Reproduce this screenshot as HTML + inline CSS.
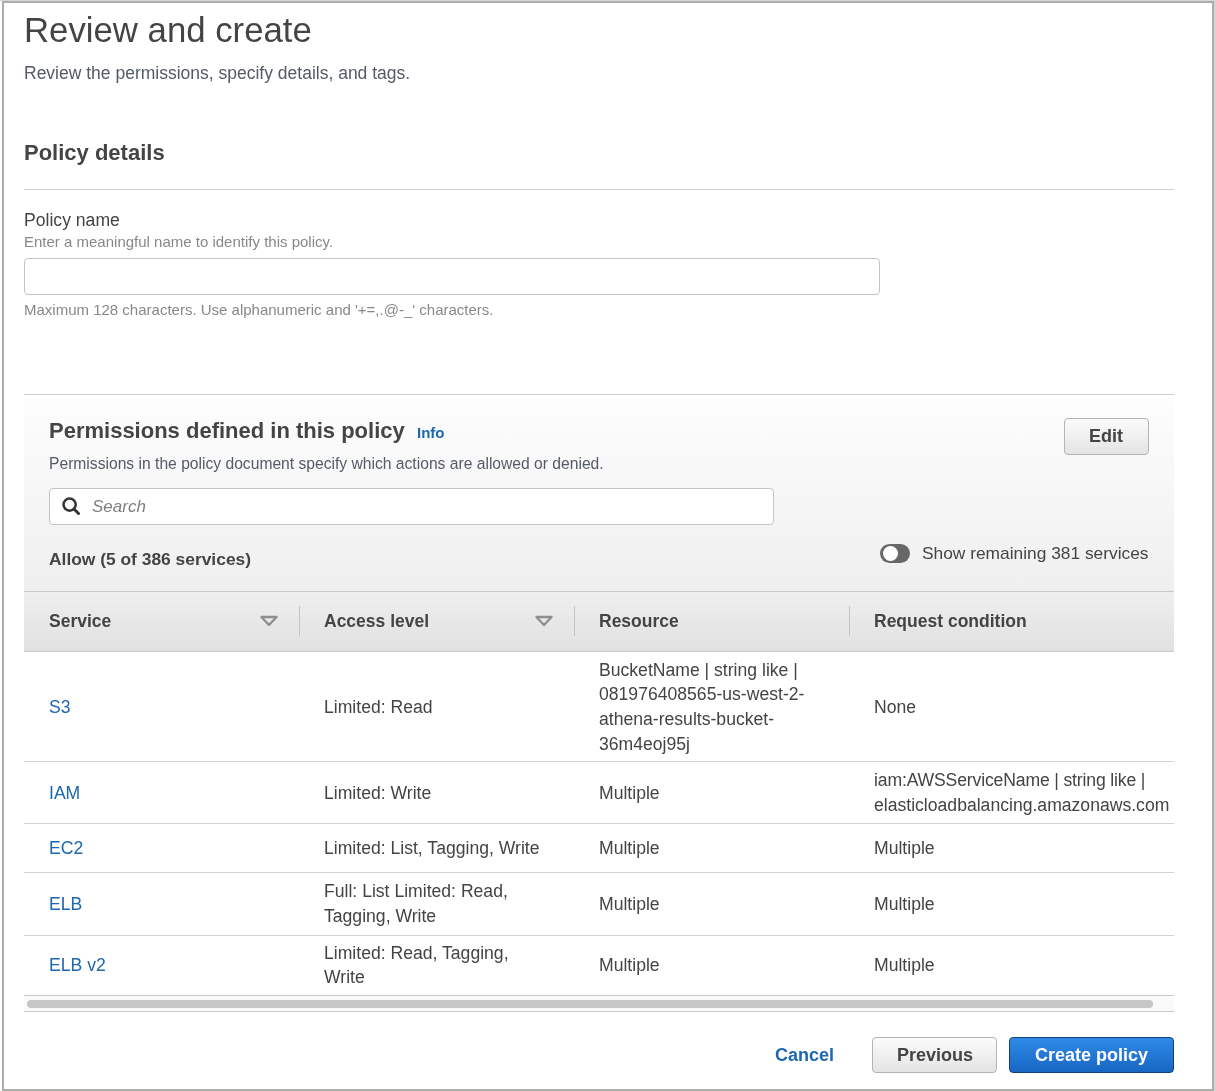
<!DOCTYPE html>
<html><head><meta charset="utf-8"><style>
html,body{margin:0;padding:0;background:#fff;}
body{width:1215px;height:1091px;position:relative;overflow:hidden;font-family:"Liberation Sans",sans-serif;}
.t{position:absolute;white-space:nowrap;will-change:transform;}
.frame{position:absolute;left:0;top:0;width:1215px;height:1091px;box-sizing:border-box;border-top:1px solid #d6d6d6;border-right:1px solid #d6d6d6;}
.frame:before{content:"";position:absolute;left:2px;top:0px;right:0px;bottom:0px;border:2px solid #adadad;}
.hr{position:absolute;left:24px;width:1150px;height:1px;background:#cfcfcf;}
.inp{position:absolute;box-sizing:border-box;border:1px solid #c4c4c4;border-radius:4px;background:#fff;}
.panel{position:absolute;left:24px;top:395px;width:1150px;height:196px;background:linear-gradient(#fff 0px,#fdfdfd 6px,#efefef);}
.btn{position:absolute;box-sizing:border-box;border:1px solid #b4b4b4;border-radius:4px;background:linear-gradient(#fbfbfb,#e4e4e4);}
.pbtn{position:absolute;box-sizing:border-box;border:1px solid #10427a;border-radius:4px;background:linear-gradient(#2f8ae7,#1866c3);}
.ico{position:absolute;}
.tog{position:absolute;left:880px;top:544px;width:30px;height:19px;border-radius:10px;background:#676767;}
.knob{position:absolute;left:2.5px;top:2px;width:15px;height:15px;border-radius:50%;background:#fff;}
.thead{position:absolute;left:24px;top:591px;width:1150px;height:61px;box-sizing:border-box;border-top:1px solid #c9c9c9;border-bottom:1px solid #c9c9c9;background:linear-gradient(#efefef,#e1e1e1);}
.div{position:absolute;top:606px;width:1px;height:30px;background:#c4c4c4;}
.rb{position:absolute;left:24px;width:1150px;height:1px;background:#d2d2d2;}
.sb{position:absolute;left:24px;top:995px;width:1150px;height:17px;box-sizing:border-box;border-top:1px solid #c9c9c9;border-bottom:1px solid #c9c9c9;background:#fafafa;}
.thumb{position:absolute;left:3px;top:4px;width:1126px;height:8px;border-radius:4px;background:#c6c6c6;}
</style></head><body>
<div class="frame"></div>
<div class="t" style="left:24px;top:8px;font-size:34.75px;line-height:45px;font-weight:400;color:#444;font-style:normal;">Review and create</div>
<div class="t" style="left:24px;top:62px;font-size:17.5px;line-height:23px;font-weight:400;color:#545b64;font-style:normal;">Review the permissions, specify details, and tags.</div>
<div class="t" style="left:24px;top:138px;font-size:22px;line-height:29px;font-weight:700;color:#444;font-style:normal;">Policy details</div>
<div class="hr" style="top:189px"></div>
<div class="t" style="left:24px;top:209px;font-size:17.6px;line-height:23px;font-weight:400;color:#444;font-style:normal;">Policy name</div>
<div class="t" style="left:24px;top:232px;font-size:15px;line-height:20px;font-weight:400;color:#888;font-style:normal;">Enter a meaningful name to identify this policy.</div>
<div class="inp" style="left:24px;top:258px;width:856px;height:37px"></div>
<div class="t" style="left:24px;top:300px;font-size:15px;line-height:20px;font-weight:400;color:#888;font-style:normal;">Maximum 128 characters. Use alphanumeric and '+=,.@-_' characters.</div>
<div class="hr" style="top:394px"></div>
<div class="panel"></div>
<div class="t" style="left:49px;top:416px;font-size:22px;line-height:29px;font-weight:700;color:#444;font-style:normal;">Permissions defined in this policy</div>
<div class="t" style="left:417px;top:423px;font-size:15px;line-height:20px;font-weight:700;color:#1c67ae;font-style:normal;">Info</div>
<div class="btn" style="left:1064px;top:418px;width:85px;height:37px"></div>
<div class="t" style="left:1089px;top:425px;font-size:18px;line-height:23px;font-weight:700;color:#444;font-style:normal;">Edit</div>
<div class="t" style="left:49px;top:454px;font-size:15.65px;line-height:20px;font-weight:400;color:#545b64;font-style:normal;">Permissions in the policy document specify which actions are allowed or denied.</div>
<div class="inp" style="left:49px;top:488px;width:725px;height:37px"></div>
<svg class="ico" style="left:60px;top:495px" width="22" height="22" viewBox="0 0 22 22"><circle cx="9.6" cy="9.6" r="6.1" fill="none" stroke="#333" stroke-width="2.5"/><line x1="14" y1="14" x2="18.5" y2="18.5" stroke="#333" stroke-width="2.9" stroke-linecap="round"/></svg>
<div class="t" style="left:92px;top:496px;font-size:17px;line-height:22px;font-weight:400;color:#7f7f7f;font-style:italic;">Search</div>
<div class="t" style="left:49px;top:548px;font-size:17.4px;line-height:23px;font-weight:700;color:#444;font-style:normal;">Allow (5 of 386 services)</div>
<div class="tog"><div class="knob"></div></div>
<div class="t" style="left:922px;top:542px;font-size:17.35px;line-height:23px;font-weight:400;color:#444;font-style:normal;">Show remaining 381 services</div>
<div class="thead"></div>
<div class="t" style="left:49px;top:610px;font-size:17.5px;line-height:23px;font-weight:700;color:#444;font-style:normal;">Service</div>
<div class="t" style="left:324px;top:610px;font-size:17.5px;line-height:23px;font-weight:700;color:#444;font-style:normal;">Access level</div>
<div class="t" style="left:599px;top:610px;font-size:17.5px;line-height:23px;font-weight:700;color:#444;font-style:normal;">Resource</div>
<div class="t" style="left:874px;top:610px;font-size:17.5px;line-height:23px;font-weight:700;color:#444;font-style:normal;">Request condition</div>
<div class="div" style="left:299px"></div>
<div class="div" style="left:574px"></div>
<div class="div" style="left:849px"></div>
<svg class="ico" style="left:259px;top:614px" width="20" height="14" viewBox="0 0 20 14"><path d="M2.4 3 L17.6 3 L10 11 Z" fill="none" stroke="#8f8f8f" stroke-width="2.3" stroke-linejoin="round"/></svg>
<svg class="ico" style="left:534px;top:614px" width="20" height="14" viewBox="0 0 20 14"><path d="M2.4 3 L17.6 3 L10 11 Z" fill="none" stroke="#8f8f8f" stroke-width="2.3" stroke-linejoin="round"/></svg>
<div class="rb" style="top:761.0px"></div>
<div class="rb" style="top:823.0px"></div>
<div class="rb" style="top:872.0px"></div>
<div class="rb" style="top:934.5px"></div>
<div class="t" style="left:49px;top:696px;font-size:17.6px;line-height:23px;font-weight:400;color:#1c67ae;font-style:normal;">S3</div>
<div class="t" style="left:324px;top:696px;font-size:17.6px;line-height:23px;font-weight:400;color:#444;font-style:normal;">Limited: Read</div>
<div class="t" style="left:599px;top:659px;font-size:17.6px;line-height:23px;font-weight:400;color:#444;font-style:normal;">BucketName | string like |</div>
<div class="t" style="left:599px;top:683px;font-size:17.6px;line-height:23px;font-weight:400;color:#444;font-style:normal;">081976408565-us-west-2-</div>
<div class="t" style="left:599px;top:708px;font-size:17.6px;line-height:23px;font-weight:400;color:#444;font-style:normal;">athena-results-bucket-</div>
<div class="t" style="left:599px;top:733px;font-size:17.6px;line-height:23px;font-weight:400;color:#444;font-style:normal;">36m4eoj95j</div>
<div class="t" style="left:874px;top:696px;font-size:17.6px;line-height:23px;font-weight:400;color:#444;font-style:normal;">None</div>
<div class="t" style="left:49px;top:782px;font-size:17.6px;line-height:23px;font-weight:400;color:#1c67ae;font-style:normal;">IAM</div>
<div class="t" style="left:324px;top:782px;font-size:17.6px;line-height:23px;font-weight:400;color:#444;font-style:normal;">Limited: Write</div>
<div class="t" style="left:599px;top:782px;font-size:17.6px;line-height:23px;font-weight:400;color:#444;font-style:normal;">Multiple</div>
<div class="t" style="left:874px;top:769px;font-size:17.6px;line-height:23px;font-weight:400;color:#444;font-style:normal;letter-spacing:-0.15px;">iam:AWSServiceName | string like |</div>
<div class="t" style="left:874px;top:794px;font-size:17.6px;line-height:23px;font-weight:400;color:#444;font-style:normal;">elasticloadbalancing.amazonaws.com</div>
<div class="t" style="left:49px;top:837px;font-size:17.6px;line-height:23px;font-weight:400;color:#1c67ae;font-style:normal;">EC2</div>
<div class="t" style="left:324px;top:837px;font-size:17.6px;line-height:23px;font-weight:400;color:#444;font-style:normal;">Limited: List, Tagging, Write</div>
<div class="t" style="left:599px;top:837px;font-size:17.6px;line-height:23px;font-weight:400;color:#444;font-style:normal;">Multiple</div>
<div class="t" style="left:874px;top:837px;font-size:17.6px;line-height:23px;font-weight:400;color:#444;font-style:normal;">Multiple</div>
<div class="t" style="left:49px;top:893px;font-size:17.6px;line-height:23px;font-weight:400;color:#1c67ae;font-style:normal;">ELB</div>
<div class="t" style="left:324px;top:880px;font-size:17.6px;line-height:23px;font-weight:400;color:#444;font-style:normal;">Full: List Limited: Read,</div>
<div class="t" style="left:324px;top:905px;font-size:17.6px;line-height:23px;font-weight:400;color:#444;font-style:normal;">Tagging, Write</div>
<div class="t" style="left:599px;top:893px;font-size:17.6px;line-height:23px;font-weight:400;color:#444;font-style:normal;">Multiple</div>
<div class="t" style="left:874px;top:893px;font-size:17.6px;line-height:23px;font-weight:400;color:#444;font-style:normal;">Multiple</div>
<div class="t" style="left:49px;top:954px;font-size:17.6px;line-height:23px;font-weight:400;color:#1c67ae;font-style:normal;">ELB v2</div>
<div class="t" style="left:324px;top:942px;font-size:17.6px;line-height:23px;font-weight:400;color:#444;font-style:normal;">Limited: Read, Tagging,</div>
<div class="t" style="left:324px;top:966px;font-size:17.6px;line-height:23px;font-weight:400;color:#444;font-style:normal;">Write</div>
<div class="t" style="left:599px;top:954px;font-size:17.6px;line-height:23px;font-weight:400;color:#444;font-style:normal;">Multiple</div>
<div class="t" style="left:874px;top:954px;font-size:17.6px;line-height:23px;font-weight:400;color:#444;font-style:normal;">Multiple</div>
<div class="sb"><div class="thumb"></div></div>
<div class="t" style="left:775px;top:1044px;font-size:18px;line-height:23px;font-weight:700;color:#1c67ae;font-style:normal;">Cancel</div>
<div class="btn" style="left:872px;top:1037px;width:125px;height:36px"></div>
<div class="t" style="left:897px;top:1044px;font-size:18px;line-height:23px;font-weight:700;color:#444;font-style:normal;">Previous</div>
<div class="pbtn" style="left:1009px;top:1037px;width:165px;height:36px"></div>
<div class="t" style="left:1035px;top:1044px;font-size:18px;line-height:23px;font-weight:700;color:#fff;font-style:normal;">Create policy</div>
</body></html>
